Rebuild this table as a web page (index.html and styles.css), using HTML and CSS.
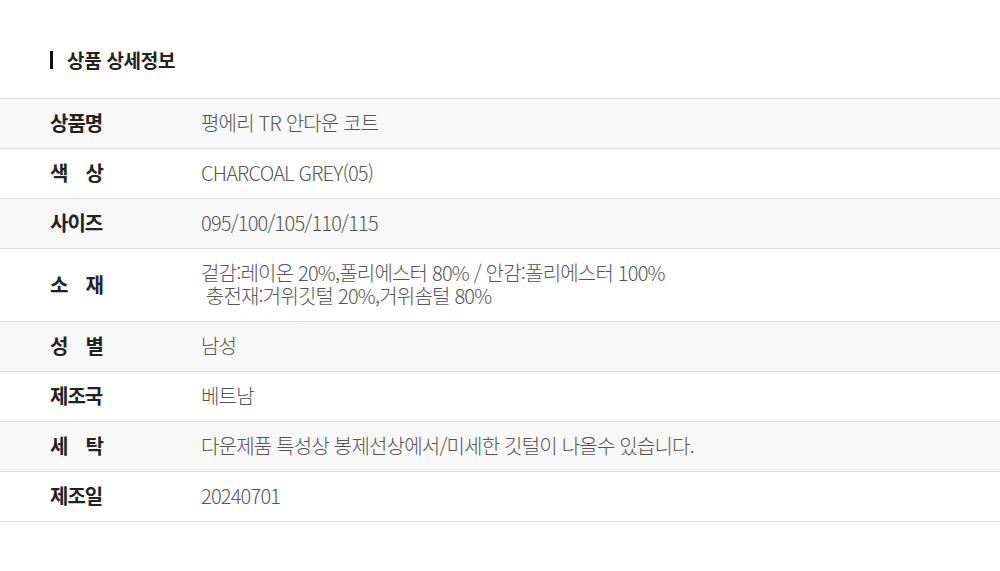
FILE: index.html
```html
<!DOCTYPE html>
<html lang="ko">
<head>
<meta charset="utf-8">
<link rel="stylesheet" href="styles.css">
</head>
<body>
<section class="detail">
  <h2 class="title">상품 상세정보</h2>
  <div class="table">
    <div class="row alt"><div class="label">상품명</div><div class="value">평에리 TR 안다운 코트</div></div>
    <div class="row"><div class="label sp"><span>색</span><span>상</span></div><div class="value">CHARCOAL GREY(05)</div></div>
    <div class="row alt"><div class="label">사이즈</div><div class="value">095/100/105/110/115</div></div>
    <div class="row"><div class="label sp"><span>소</span><span>재</span></div><div class="value">겉감:레이온 20%,폴리에스터 80% / 안감:폴리에스터 100%<br>&nbsp;충전재:거위깃털 20%,거위솜털 80%</div></div>
    <div class="row alt"><div class="label sp"><span>성</span><span>별</span></div><div class="value">남성</div></div>
    <div class="row"><div class="label">제조국</div><div class="value">베트남</div></div>
    <div class="row alt"><div class="label sp"><span>세</span><span>탁</span></div><div class="value">다운제품 특성상 봉제선상에서/미세한 깃털이 나올수 있습니다.</div></div>
    <div class="row"><div class="label">제조일</div><div class="value">20240701</div></div>
  </div>
</section>
</body>
</html>
```
FILE: styles.css
```css
html, body {
  margin: 0;
  padding: 0;
  background: #fff;
}
body {
  font-family: "Noto Sans CJK KR", "Noto Sans", sans-serif;
  width: 1000px;
  height: 571px;
  overflow: hidden;
}
.detail {
  padding-top: 51px;
}
.title {
  margin: 0 0 29px 50px;
  padding-left: 14px;
  border-left: 3px solid #111;
  font-size: 19px;
  font-weight: 700;
  line-height: 18px;
  height: 18px;
  color: #222;
  letter-spacing: -0.3px;
  display: flex;
  align-items: center;
}
.table {
  border-top: 1px solid #dcdcdc;
}
.row {
  display: flex;
  border-bottom: 1px solid #dcdcdc;
  padding: 12px 0 14px;
  background: #fff;
}
.row.alt {
  background: #f8f8f8;
}
.label {
  width: 53px;
  margin-left: 50px;
  flex: none;
  font-size: 20px;
  font-weight: 700;
  color: #222;
  line-height: 23px;
  letter-spacing: -1px;
  display: flex;
  align-items: center;
  white-space: nowrap;
}
.label.sp {
  justify-content: space-between;
}
.value {
  margin-left: 98px;
  font-size: 20px;
  font-weight: 300;
  color: #555;
  line-height: 23px;
  letter-spacing: -0.8px;
}
```
